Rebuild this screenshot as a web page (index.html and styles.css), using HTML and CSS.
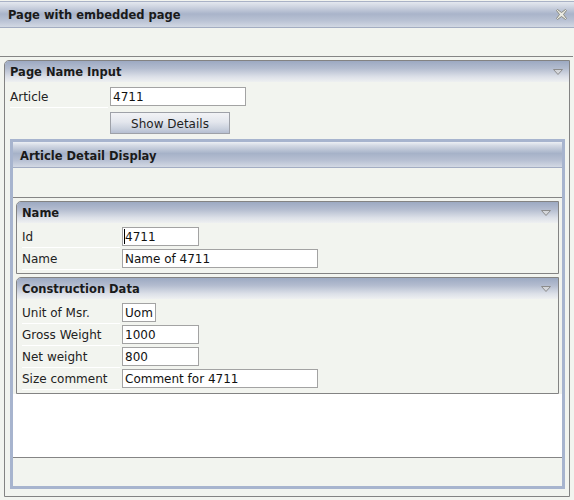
FILE: index.html
```html
<!DOCTYPE html>
<html>
<head>
<meta charset="utf-8">
<title>Page with embedded page</title>
<link rel="stylesheet" href="styles.css">
</head>
<body>
<div class="app">
  <div class="titlebar">
    <span class="title">Page with embedded page</span>
    <svg class="close" width="11" height="11" viewBox="0 0 11 11"><path d="M1.5 .5 L5.5 3.5 L9.5 .5 L10.5 1.5 L7.5 5.5 L10.5 9.5 L9.5 10.5 L5.5 7.5 L1.5 10.5 L.5 9.5 L3.5 5.5 L.5 1.5 Z" fill="#ebebe3" stroke="#8a8a80"/></svg>
  </div>
  <div class="toolbar"></div>

  <div class="panel outer">
    <div class="phead">
      <span>Page Name Input</span>
      <svg class="tri" width="10" height="6" viewBox="0 0 10 6"><path d="M.5 .5 H9.5 L5 5.5 Z" fill="#d4d6da" stroke="#8c8c8c"/></svg>
    </div>
    <div class="pbody">
      <div class="row">
        <div class="lbl">Article</div>
        <div class="field w135">4711</div>
      </div>
      <div class="btnrow">
        <button class="btn" type="button">Show Details</button>
      </div>

      <div class="frame">
        <div class="fhead">Article Detail Display</div>
        <div class="fbar"></div>
        <div class="fcontent">
          <div class="form">
            <div class="panel sub">
              <div class="phead">
                <span>Name</span>
                <svg class="tri" width="10" height="6" viewBox="0 0 10 6"><path d="M.5 .5 H9.5 L5 5.5 Z" fill="#d4d6da" stroke="#8c8c8c"/></svg>
              </div>
              <div class="subbody">
                <div class="row">
                  <div class="lbl">Id</div>
                  <div class="field w76"><span class="caret"></span>4711</div>
                </div>
                <div class="row">
                  <div class="lbl">Name</div>
                  <div class="field w195">Name of 4711</div>
                </div>
              </div>
            </div>
            <div class="panel sub">
              <div class="phead">
                <span>Construction Data</span>
                <svg class="tri" width="10" height="6" viewBox="0 0 10 6"><path d="M.5 .5 H9.5 L5 5.5 Z" fill="#d4d6da" stroke="#8c8c8c"/></svg>
              </div>
              <div class="subbody">
                <div class="row">
                  <div class="lbl">Unit of Msr.</div>
                  <div class="field w33">Uom</div>
                </div>
                <div class="row">
                  <div class="lbl">Gross Weight</div>
                  <div class="field w76">1000</div>
                </div>
                <div class="row">
                  <div class="lbl">Net weight</div>
                  <div class="field w76">800</div>
                </div>
                <div class="row">
                  <div class="lbl">Size comment</div>
                  <div class="field w195">Comment for 4711</div>
                </div>
              </div>
            </div>
          </div>
        </div>
        <div class="ffoot"></div>
      </div>
    </div>
  </div>
</div>
</body>
</html>
```

FILE: styles.css
```css
html, body {
  margin: 0;
  padding: 0;
}
body {
  background: #f2f4ef;
  font-family: "DejaVu Sans", Verdana, sans-serif;
  font-size: 12px;
  color: #1f1f1f;
}
.app {
  height: 500px;
  box-sizing: border-box;
  padding-top: 1px;
  overflow: hidden;
}
.titlebar {
  height: 25px;
  border-top: 1px solid #a9b2c6;
  border-bottom: 1px solid #a3adc2;
  background: linear-gradient(to bottom, #e4e8ef 0%, #d2d8e3 16%, #a9b4ca 48%, #b9c2d4 74%, #d2d8e3 100%);
  display: flex;
  align-items: center;
  justify-content: space-between;
  padding: 0 7px 0 8px;
}
.title {
  font-weight: bold;
  font-size: 11.5px;
  color: #1a1a1a;
}
.close {
  display: block;
}
.toolbar {
  height: 28px;
  border-bottom: 1px solid #858585;
  margin-right: 1px;
}
.panel {
  border: 1px solid #838383;
  border-top-left-radius: 5px;
}
.outer {
  margin: 3px 4px 0;
}
.phead {
  height: 21px;
  display: flex;
  align-items: center;
  justify-content: space-between;
  padding: 0 6px 0 5px;
  border-top-left-radius: 4px;
  background: linear-gradient(to bottom, #9ca9c2 0%, #b3bccf 35%, #dce0e8 75%, #eef0f1 100%);
  font-weight: bold;
  font-size: 11.5px;
  color: #1a1a1a;
}
.tri {
  display: block;
  margin-top: 1px;
}
.pbody {
  padding: 4px 4px 7px 5px;
}
.row {
  display: flex;
  height: 22px;
}
.lbl {
  width: 98px;
  height: 21px;
  margin-right: 2px;
  border-bottom: 1px solid #ffffff;
  line-height: 23px;
  color: #222;
  white-space: nowrap;
}
.field {
  box-sizing: border-box;
  height: 19px;
  margin-top: 1px;
  border: 1px solid #a3a3a3;
  background: #fff;
  padding: 1px 0 0 2px;
  line-height: 17px;
  color: #111;
  white-space: nowrap;
  overflow: hidden;
}
.w33 { width: 34px; }
.w76 { width: 77px; }
.w135 { width: 136px; }
.w195 { width: 196px; }
.caret {
  display: inline-block;
  width: 0;
  height: 15px;
  border-left: 1px solid #000;
  margin-left: -1px;
  vertical-align: -3px;
}
.btnrow {
  display: flex;
  padding-left: 100px;
  margin-top: 4px;
}
.btn {
  width: 120px;
  height: 22px;
  box-sizing: border-box;
  border: 1px solid #9ea1a8;
  background: linear-gradient(to bottom, #f2f3f6 0%, #e3e6ed 45%, #c9d0dd 80%, #b6bfd1 100%);
  font-family: "DejaVu Sans", Verdana, sans-serif;
  font-size: 12px;
  color: #1f1f1f;
  padding: 2px 0 0;
  margin: 0;
}
.frame {
  margin-top: 5px;
  height: 350px;
  box-sizing: border-box;
  border: 3px solid #a7b4ce;
  display: flex;
  flex-direction: column;
}
.fhead {
  height: 26px;
  flex: none;
  box-sizing: border-box;
  padding: 2px 0 0 7px;
  border-bottom: 1px solid #a3adc3;
  display: flex;
  align-items: center;
  background: linear-gradient(to bottom, #eceff4 0%, #d3d9e4 14%, #a6b2c8 46%, #b6bfd2 72%, #d3d9e4 100%);
  font-weight: bold;
  font-size: 11.5px;
  color: #1a1a1a;
}
.fbar {
  height: 29px;
  flex: none;
  border-bottom: 1px solid #858585;
}
.fcontent {
  flex: 1;
  background: #ffffff;
}
.form {
  background: #f2f4ef;
  padding: 3px 3px 0;
  display: flex;
  flex-direction: column;
  gap: 3px;
}
.sub .phead {
  padding-right: 7px;
}
.subbody {
  padding: 3px 5px;
}
.ffoot {
  height: 28px;
  flex: none;
  border-top: 1px solid #858585;
}
```
